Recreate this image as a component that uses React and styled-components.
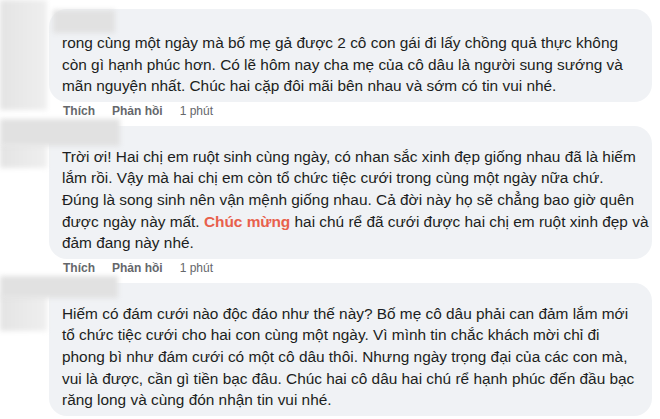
import React from 'react';
import styled, { createGlobalStyle } from 'styled-components';

const $text = '#1c1e21';
const $bubble = '#f0f2f5';
const $meta = '#65676b';
const $accent = '#e8604c';

const comments = [
  {
    id: 1,
    head: 23,
    patches: [
      { top: -9, left: 0, width: 47, height: 110, tone: 'soft' },
      { top: 1, left: 53, width: 62, height: 23, tone: 'name' },
    ],
    lines: [
      'rong cùng một ngày mà bố mẹ gả được 2 cô con gái đi lấy chồng quả thực không',
      'còn gì hạnh phúc hơn. Có lẽ hôm nay cha mẹ của cô dâu là người sung sướng và',
      'mãn nguyện nhất. Chúc hai cặp đôi mãi bên nhau và sớm có tin vui nhé.',
    ],
  },
  {
    id: 2,
    head: 20,
    patches: [
      { top: 18, left: 0, width: 47, height: 24, tone: 'soft' },
      { top: -7, left: 0, width: 120, height: 27, tone: 'name' },
    ],
    lines: [
      'Trời ơi! Hai chị em ruột sinh cùng ngày, có nhan sắc xinh đẹp giống nhau đã là hiếm',
      'lắm rồi. Vậy mà hai chị em còn tổ chức tiệc cưới trong cùng một ngày nữa chứ.',
      'Đúng là song sinh nên vận mệnh giống nhau. Cả đời này họ sẽ chẳng bao giờ quên',
      ['được ngày này mất. ', { mark: 'Chúc mừng' }, ' hai chú rể đã cưới được hai chị em ruột xinh đẹp và'],
      'đảm đang này nhé.',
    ],
  },
  {
    id: 3,
    head: 20,
    patches: [
      { top: 12, left: 0, width: 47, height: 36, tone: 'soft' },
      { top: -7, left: 0, width: 118, height: 22, tone: 'name' },
    ],
    lines: [
      'Hiếm có đám cưới nào độc đáo như thế này? Bố mẹ cô dâu phải can đảm lắm mới',
      'tổ chức tiệc cưới cho hai con cùng một ngày. Vì mình tin chắc khách mời chỉ đi',
      'phong bì như đám cưới có một cô dâu thôi. Nhưng ngày trọng đại của các con mà,',
      'vui là được, cần gì tiền bạc đâu. Chúc hai cô dâu hai chú rể hạnh phúc đến đầu bạc',
      'răng long và cùng đón nhận tin vui nhé.',
    ],
    last: true,
  },
];

function renderLine(line) {
  if (typeof line === 'string') return line;
  return line.map((part, i) =>
    typeof part === 'string' ? part : <Mark key={i}>{part.mark}</Mark>
  );
}

export default function App() {
  return (
    <>
      <GlobalStyle />
      <StyledPage>
        {comments.map((c) => (
          <StyledComment key={c.id}>
            {c.patches.map((p, i) => (
              <StyledPatch
                key={i}
                $top={p.top}
                $left={p.left}
                $width={p.width}
                $height={p.height}
                $tone={p.tone}
              />
            ))}
            <StyledAvatarSlot />
            <StyledBody>
              <StyledBubble>
                <StyledHead $height={c.head} />
                {c.lines.map((line, i) => (
                  <StyledLine key={i}>{renderLine(line)}</StyledLine>
                ))}
              </StyledBubble>
              {!c.last && (
                <StyledActions>
                  <StyledAction>Thích</StyledAction>
                  <StyledAction>Phản hồi</StyledAction>
                  <StyledTime>1 phút</StyledTime>
                </StyledActions>
              )}
            </StyledBody>
          </StyledComment>
        ))}
      </StyledPage>
    </>
  );
}

const GlobalStyle = createGlobalStyle`
  html, body {
    margin: 0;
    padding: 0;
    background: #ffffff;
  }
  body {
    font-family: "Liberation Sans", Arial, sans-serif;
    color: ${$text};
  }
`;

const StyledPage = styled.div`
  width: 660px;
  height: 419px;
  overflow: hidden;
  padding: 9px 8px 0 0;
  box-sizing: border-box;
  display: flex;
  flex-direction: column;
  gap: 7px;
`;

const StyledComment = styled.div`
  position: relative;
  display: flex;
`;

const StyledPatch = styled.div`
  position: absolute;
  top: ${(p) => p.$top}px;
  left: ${(p) => p.$left}px;
  width: ${(p) => p.$width}px;
  height: ${(p) => p.$height}px;
  background: ${(p) =>
    p.$tone === 'name'
      ? '#e1e1e1'
      : 'linear-gradient(to right, #e4e4e4, #efefef)'};
  filter: blur(2.5px);
  z-index: 1;
`;

const StyledAvatarSlot = styled.div`
  flex: 0 0 49px;
`;

const StyledBody = styled.div`
  flex: 1;
  min-width: 0;
`;

const StyledBubble = styled.div`
  background: ${$bubble};
  border-radius: 18px;
  padding: 0 12px 5px 13px;
`;

const StyledHead = styled.div`
  height: ${(p) => p.$height}px;
`;

const StyledLine = styled.div`
  font-size: 15.4px;
  line-height: 21.6px;
  white-space: nowrap;
`;

const Mark = styled.span`
  color: ${$accent};
  font-weight: 700;
`;

const StyledActions = styled.div`
  display: flex;
  gap: 17px;
  align-items: center;
  height: 16px;
  margin-top: 1px;
  padding-left: 14px;
  font-size: 12px;
  color: ${$meta};
`;

const StyledAction = styled.span`
  font-weight: 700;
`;

const StyledTime = styled.span`
  font-weight: 400;
`;
